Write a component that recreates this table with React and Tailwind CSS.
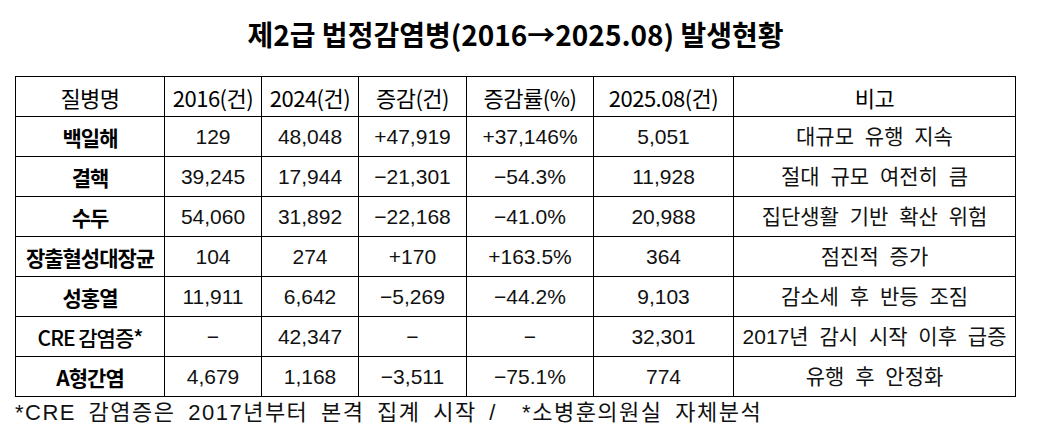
import React from 'react';

const rows = [
  { name: '백일해', y16: '129', y24: '48,048', diff: '+47,919', rate: '+37,146%', y25: '5,051', note: '대규모 유행 지속' },
  { name: '결핵', y16: '39,245', y24: '17,944', diff: '−21,301', rate: '−54.3%', y25: '11,928', note: '절대 규모 여전히 큼' },
  { name: '수두', y16: '54,060', y24: '31,892', diff: '−22,168', rate: '−41.0%', y25: '20,988', note: '집단생활 기반 확산 위험' },
  { name: '장출혈성대장균', y16: '104', y24: '274', diff: '+170', rate: '+163.5%', y25: '364', note: '점진적 증가' },
  { name: '성홍열', y16: '11,911', y24: '6,642', diff: '−5,269', rate: '−44.2%', y25: '9,103', note: '감소세 후 반등 조짐' },
  { name: 'CRE 감염증*', y16: '−', y24: '42,347', diff: '−', rate: '−', y25: '32,301', note: '2017년 감시 시작 이후 급증', light: true },
  { name: 'A형간염', y16: '4,679', y24: '1,168', diff: '−3,511', rate: '−75.1%', y25: '774', note: '유행 후 안정화' },
];

const headers = [
  { label: '질병명', w: 'w-[149px]' },
  { label: '2016(건)', w: 'w-[97px]' },
  { label: '2024(건)', w: 'w-[97px]' },
  { label: '증감(건)', w: 'w-[108px]' },
  { label: '증감률(%)', w: 'w-[127px]' },
  { label: '2025.08(건)', w: 'w-[140px]' },
  { label: '비고', w: 'w-[282px]' },
];

export default function App() {
  const cell = "border border-black h-[40px] p-0 text-center align-middle text-[21px] leading-[24px] text-[#111] [word-spacing:5px]";

  return (
    <div className="w-[1037px] h-[441px] bg-white overflow-hidden font-['Liberation_Sans','Noto_Sans_CJK_KR',sans-serif]">
      <div className="pl-[15px] w-[1016px]">
        {/* Title */}
        <div className="h-[76px] pt-[14px]">
          <h1 className="text-center text-[28px] leading-[40px] font-bold text-black font-['Noto_Sans_CJK_KR',sans-serif]">
            제2급 법정감염병(2016→2025.08) 발생현황
          </h1>
        </div>

        {/* Table */}
        <table className="border-collapse table-fixed w-[1000px]">
          <thead>
            <tr>
              {headers.map((h) => (
                <th
                  key={h.label}
                  className={`${h.w} border border-black h-[40px] p-0 text-center align-middle font-normal text-[22px] leading-[26px] text-black tracking-[-0.5px] font-['Noto_Sans_CJK_KR',sans-serif]`}
                >
                  {h.label}
                </th>
              ))}
            </tr>
          </thead>
          <tbody>
            {rows.map((r) => (
              <tr key={r.name}>
                <td
                  className={`border border-black h-[40px] p-0 text-center align-middle text-[21px] leading-[24px] text-black tracking-[-1px] font-['Noto_Sans_CJK_KR',sans-serif] ${
                    r.light ? 'font-medium' : 'font-bold'
                  }`}
                >
                  {r.name}
                </td>
                <td className={cell}>{r.y16}</td>
                <td className={cell}>{r.y24}</td>
                <td className={cell}>{r.diff}</td>
                <td className={cell}>{r.rate}</td>
                <td className={cell}>{r.y25}</td>
                <td className={cell}>{r.note}</td>
              </tr>
            ))}
          </tbody>
        </table>

        {/* Footnote */}
        <p className="h-[32px] leading-[32px] text-[22px] text-[#111] whitespace-pre tracking-[1.5px] [word-spacing:5px]">
          {'*CRE 감염증은 2017년부터 본격 집계 시작 /  *소병훈의원실 자체분석'}
        </p>
      </div>
    </div>
  );
}
